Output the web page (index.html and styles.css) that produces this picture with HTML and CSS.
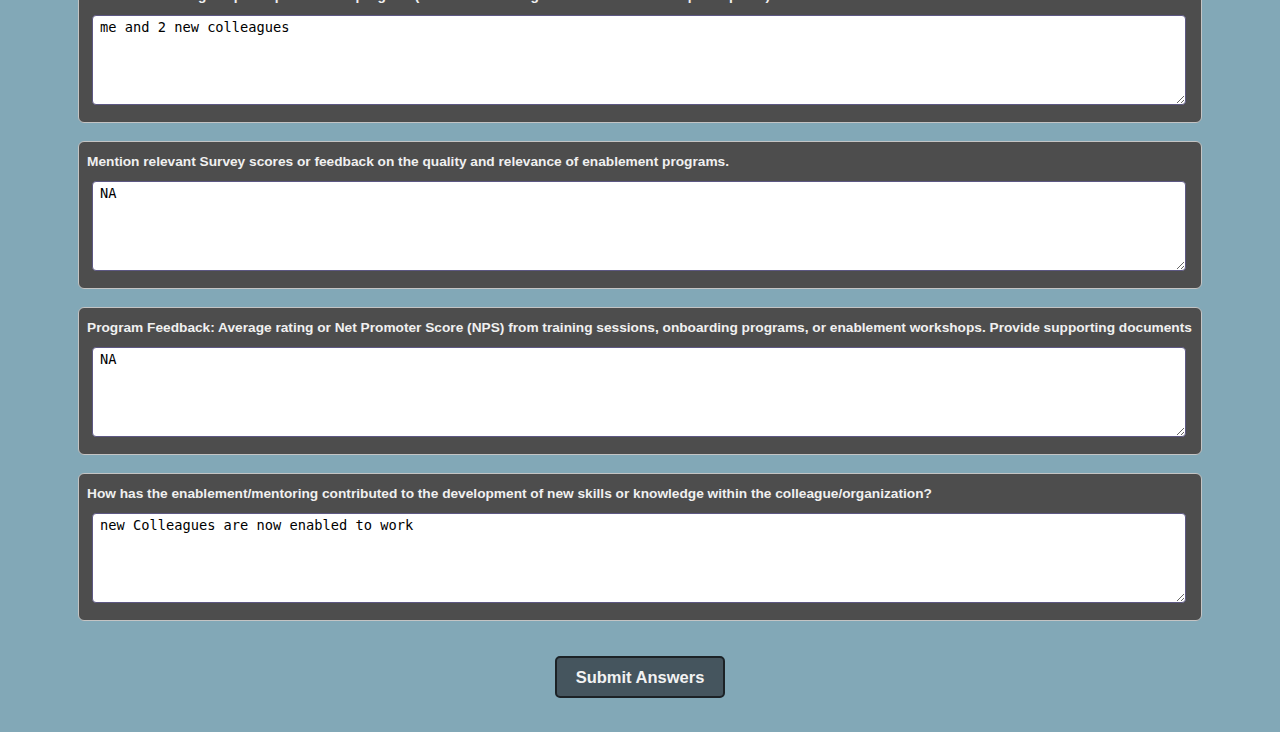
FILE: index.html
```html
<!DOCTYPE html>
<html lang="en">
<head>
<meta charset="utf-8">
<title>Enablement Questions</title>
<link rel="stylesheet" href="styles.css">
</head>
<body>
<main class="survey">
  <section class="card">
    <label class="question" for="q1">Number of colleagues participated in the program (Number of colleagues enabled/mentored participants)</label>
    <textarea id="q1" class="answer">me and 2 new colleagues</textarea>
  </section>
  <section class="card">
    <label class="question" for="q2">Mention relevant Survey scores or feedback on the quality and relevance of enablement programs.</label>
    <textarea id="q2" class="answer">NA</textarea>
  </section>
  <section class="card">
    <label class="question" for="q3">Program Feedback: Average rating or Net Promoter Score (NPS) from training sessions, onboarding programs, or enablement workshops. Provide supporting documents</label>
    <textarea id="q3" class="answer">NA</textarea>
  </section>
  <section class="card">
    <label class="question" for="q4">How has the enablement/mentoring contributed to the development of new skills or knowledge within the colleague/organization?</label>
    <textarea id="q4" class="answer">new Colleagues are now enabled to work</textarea>
  </section>
  <div class="actions">
    <button class="submit" type="button">Submit Answers</button>
  </div>
</main>
</body>
</html>
```
FILE: styles.css
```css
html, body {
  margin: 0;
  padding: 0;
  background: #82a8b7;
  font-family: "Liberation Sans", Arial, sans-serif;
}

.survey {
  width: 1124px;
  margin: -25px auto 0;
  display: flex;
  flex-direction: column;
  gap: 18px;
}

.card {
  box-sizing: border-box;
  height: 148px;
  background: #4d4d4d;
  border: 1px solid #c4c4c4;
  border-radius: 6px;
  padding: 11px 15px 17px 8px;
  display: flex;
  flex-direction: column;
}

.question {
  color: #f0f0f0;
  font-weight: bold;
  font-size: 13.7px;
  line-height: 17px;
  white-space: nowrap;
}

.answer {
  box-sizing: border-box;
  margin: 11px 0 0 5px;
  height: 90px;
  width: calc(100% - 5px);
  border: 1px solid #5d5883;
  border-radius: 4px;
  background: #ffffff;
  color: #000;
  font-family: "DejaVu Sans Mono", monospace;
  font-size: 13.7px;
  line-height: 16px;
  padding: 3px 7px;
  resize: vertical;
}

.actions {
  display: flex;
  justify-content: center;
  padding: 17px 0 34px;
}

.submit {
  box-sizing: border-box;
  width: 170px;
  height: 42px;
  background: #45555e;
  color: #f2f2f2;
  border: 2px solid #1c2226;
  border-radius: 5px;
  font-family: "Liberation Sans", Arial, sans-serif;
  font-weight: bold;
  font-size: 16.5px;
  cursor: pointer;
}
```
